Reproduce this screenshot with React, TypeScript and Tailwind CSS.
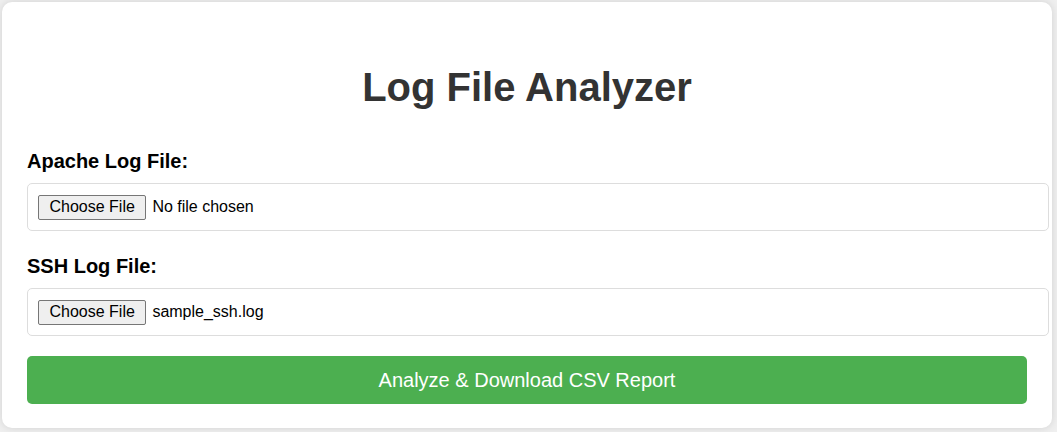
import React from 'react';

function FileField({ label, fileName }: { label: string; fileName: string }) {
  return (
    <div>
      <div className="text-[20px] leading-[23px] font-bold text-black mb-[10px]">{label}</div>
      <div className="w-[1022px] h-[48px] border border-[#dddddd] rounded-[5px] px-[10px] flex items-center">
        <span className="h-[25px] flex items-center px-[10.5px] bg-[#efefef] border border-[#767676] rounded-[2px] text-[16px] text-black">
          Choose File
        </span>
        <span className="ml-[6px] text-[16px] text-black">{fileName}</span>
      </div>
    </div>
  );
}

export default function App() {
  return (
    <div className="w-[1057px] h-[432px] bg-[#efefef] overflow-hidden font-['Liberation_Sans',Arial,sans-serif]">
      <div className="ml-[2px] mt-[2px] w-[1050px] h-[426px] bg-white rounded-[10px] shadow-[0_0_8px_rgba(0,0,0,0.12)] p-[25px]">
        <h1 className="mt-[37px] text-center text-[40px] leading-[46px] font-bold text-[#333333]">
          Log File Analyzer
        </h1>

        <div className="mt-[40px]">
          <FileField label="Apache Log File:" fileName="No file chosen" />
        </div>

        <div className="mt-[24px]">
          <FileField label="SSH Log File:" fileName="sample_ssh.log" />
        </div>

        <button className="mt-[20px] w-full h-[48px] bg-[#4caf50] rounded-[5px] text-white text-[20px] flex items-center justify-center">
          Analyze &amp; Download CSV Report
        </button>
      </div>
    </div>
  );
}
